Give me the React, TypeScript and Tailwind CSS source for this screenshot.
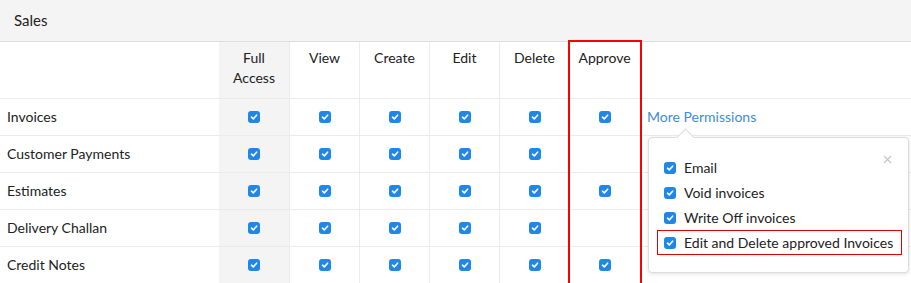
import { Fragment } from "react";

const columns = ["Full Access", "View", "Create", "Edit", "Delete", "Approve"];

const rows = [
  { name: "Invoices", approve: true, more: true },
  { name: "Customer Payments", approve: false },
  { name: "Estimates", approve: true },
  { name: "Delivery Challan", approve: false },
  { name: "Credit Notes", approve: true },
];

const extraPermissions = ["Email", "Void invoices", "Write Off invoices", "Edit and Delete approved Invoices"];

function Check() {
  return (
    <span className="inline-flex h-[12px] w-[12px] items-center justify-center rounded-[3px] bg-[#1f87e8]">
      <svg width="8" height="8" viewBox="0 0 8 8" fill="none">
        <path d="M1.5 4.2 L3.3 5.9 L6.6 2.2" stroke="white" strokeWidth="1.6" strokeLinecap="round" strokeLinejoin="round" />
      </svg>
    </span>
  );
}

export default function App() {
  return (
    <div className="relative w-[911px] h-[283px] overflow-hidden bg-white text-[14px] text-[#222] font-['Lato','Open_Sans',sans-serif]">
      <div className="flex h-[42px] items-center border-b border-[#dedede] bg-[#f4f4f4] pl-[14px] pb-[1px] text-[15px]">Sales</div>

      <div className="grid grid-cols-[219px_70px_70px_70px_70px_70px_70px_1fr]">
        {/* header row */}
        <div className="h-[57px] border-b border-[#ebebeb]" />
        {columns.map((col, i) => (
          <div
            key={col}
            className={`h-[57px] border-b border-[#ebebeb] pt-[6px] text-center leading-[20px] ${i === 0 ? "bg-[#f4f4f4]" : "border-l"}`}
          >
            {col === "Full Access" ? (
              <>
                Full
                <br />
                Access
              </>
            ) : (
              col
            )}
          </div>
        ))}
        <div className="h-[57px] border-b border-[#ebebeb]" />

        {rows.map((row) => (
          <Fragment key={row.name}>
            <div className="flex h-[37px] items-center border-b border-[#ebebeb] pb-[2px] pl-[7px]">{row.name}</div>
            {columns.map((col, i) => (
              <div
                key={col}
                className={`flex h-[37px] items-center justify-center border-b border-[#ebebeb] ${i === 0 ? "bg-[#f4f4f4]" : "border-l"}`}
              >
                {(col !== "Approve" || row.approve) && <Check />}
              </div>
            ))}
            <div className="flex h-[37px] items-center border-b border-[#ebebeb] pb-[2px] pl-[8px]">
              {row.more && <span className="text-[#3f8bd8]">More Permissions</span>}
            </div>
          </Fragment>
        ))}
      </div>

      {/* highlight around Approve column */}
      <div className="pointer-events-none absolute left-[568px] top-[40px] h-[260px] w-[74px] border-2 border-[#ff0000]" />

      {/* more permissions popover */}
      <div className="absolute left-[648px] top-[137px] h-[136px] w-[261px] rounded-[4px] border border-[#dcdcdc] bg-white pt-[17px] pl-[8px] shadow-[0_1px_4px_rgba(0,0,0,0.12)]">
        <div className="absolute -top-[7px] left-[30px] h-[13px] w-[13px] rotate-45 border-l border-t border-[#dcdcdc] bg-white" />
        <svg className="absolute right-[16px] top-[17px]" width="9" height="9" viewBox="0 0 9 9">
          <path d="M1 1 L8 8 M8 1 L1 8" stroke="#c6c6c6" strokeWidth="1.2" />
        </svg>
        {extraPermissions.map((p, i) => (
          <div
            key={p}
            className={`flex h-[25px] w-[245px] items-center gap-[8px] border pl-[6px] ${i === extraPermissions.length - 1 ? "border-[#e60000]" : "border-transparent"}`}
          >
            <Check />
            <span className="pb-[1px]">{p}</span>
          </div>
        ))}
      </div>
    </div>
  );
}
